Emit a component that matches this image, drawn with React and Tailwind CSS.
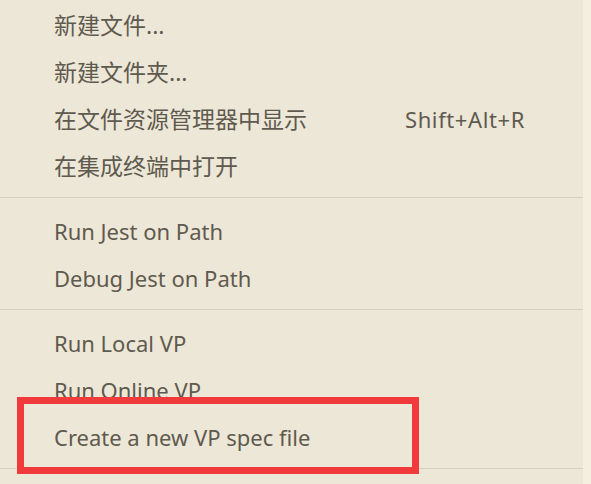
import React from 'react'

const groups = [
    [
        { label: '新建文件...', cjk: true },
        { label: '新建文件夹...', cjk: true },
        { label: '在文件资源管理器中显示', shortcut: 'Shift+Alt+R', cjk: true },
        { label: '在集成终端中打开', cjk: true },
    ],
    [
        { label: 'Run Jest on Path' },
        { label: 'Debug Jest on Path' },
    ],
    [
        { label: 'Run Local VP' },
        { label: 'Run Online VP' },
        { label: 'Create a new VP spec file' },
    ],
]

const MenuRow = ({ label, shortcut, cjk }) => (
    <div className="flex h-[47px] items-center justify-between pl-[54px] pr-[58px]">
        <span className={cjk ? 'text-[23px]' : 'text-[22px]'}>{label}</span>
        {shortcut && <span className="text-[22px] tracking-[0.6px]">{shortcut}</span>}
    </div>
)

const App = () => {
    return (
        <div
            className="h-[484px] w-[591px] overflow-hidden bg-[#f5efe2] text-[#5f5a4f]"
            style={{ fontFamily: '"Noto Sans", "Noto Sans CJK SC", sans-serif' }}
        >
            <div className="relative h-full w-[583px] bg-[#ede7d7] pt-[2px]">
                {groups.map((group, i) => (
                    <div key={i}>
                        {group.map((item) => (
                            <MenuRow key={item.label} {...item} />
                        ))}
                        <div className="mt-[7px] mb-[10px] h-px bg-[#d6d0c1]" />
                    </div>
                ))}

                {/* highlight box */}
                <div className="absolute left-[17px] top-[397px] h-[77px] w-[402px] border-[7px] border-[#f03a3c]" />
            </div>
        </div>
    )
}

export default App
